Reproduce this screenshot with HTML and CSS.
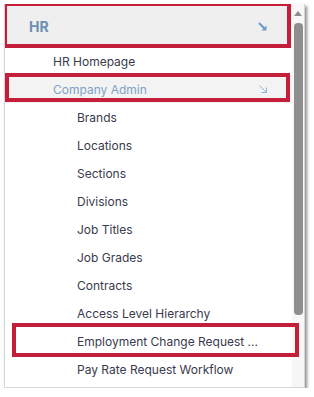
FILE: index.html
```html
<!DOCTYPE html>
<html>
<head>
    <title>Menu</title>
    <meta charset="utf-8"/>
    <link rel="stylesheet" href="styles.css">
</head>
<body>
    <div class="panel">
        <div class="menu">
            <div class="menu-head marked marked-head">
                <span>HR</span>
                <svg class="arrow" width="9" height="9" viewBox="0 0 9 9">
                    <path d="M1 1 L7 7" stroke="#6f9ccb" stroke-width="2.2"/>
                    <path d="M3.5 8.5 L8.5 8.5 L8.5 3.5 Z" fill="#6f9ccb"/>
                </svg>
            </div>
            <div class="item">HR Homepage</div>
            <div class="item item-open marked marked-sub">
                <span>Company Admin</span>
                <svg class="arrow-small" width="8" height="8" viewBox="0 0 8 8">
                    <path d="M0.5 0.5 L7 7" stroke="#8fb3d8" stroke-width="1"/>
                    <path d="M2.5 7.5 L7.5 7.5 L7.5 2.5" stroke="#8fb3d8" stroke-width="1" fill="none"/>
                </svg>
            </div>
            <div class="item sub">Brands</div>
            <div class="item sub">Locations</div>
            <div class="item sub">Sections</div>
            <div class="item sub">Divisions</div>
            <div class="item sub">Job Titles</div>
            <div class="item sub">Job Grades</div>
            <div class="item sub">Contracts</div>
            <div class="item sub">Access Level Hierarchy</div>
            <div class="item sub marked marked-row">Employment Change Request ...</div>
            <div class="item sub">Pay Rate Request Workflow</div>
        </div>
        <div class="scrollbar">
            <div class="scroll-up"></div>
            <div class="thumb"></div>
        </div>
    </div>
</body>
</html>
```

FILE: styles.css
```css
body {
    margin: 0;
    background-color: #ffffff;
    font-family: Inter, "Liberation Sans", sans-serif;
}

.panel {
    margin: 4px 0 0 4px;
    width: 299px;
    height: 383px;
    border: 1px solid #d6d6d6;
    border-top: none;
    display: flex;
    overflow: hidden;
    box-shadow: 2px 2px 3px rgba(0, 0, 0, 0.45);
    background-color: #ffffff;
}

.menu {
    width: 287px;
    flex-shrink: 0;
    padding-top: 1px;
}

.menu-head {
    height: 42px;
    display: flex;
    align-items: center;
    justify-content: space-between;
    padding: 0 25px 0 24px;
    background-color: #efefef;
    color: #6c90b4;
    font-size: 14px;
    font-weight: 700;
}

.item {
    height: 28px;
    display: flex;
    align-items: center;
    padding-left: 48px;
    font-size: 12px;
    color: #393a4d;
    white-space: nowrap;
}

.item-open {
    justify-content: space-between;
    padding-right: 25px;
    background-color: #f3f3f3;
    color: #7ea2c6;
}

.sub {
    padding-left: 72px;
}

.marked {
    position: relative;
}

.marked::after {
    content: "";
    position: absolute;
    border: 4px solid #c41e3a;
    z-index: 2;
}

.marked-head::after {
    top: -3px;
    left: -2px;
    right: 1px;
    bottom: -1px;
}

.marked-sub::after {
    top: -2px;
    left: 0;
    right: 2px;
    bottom: 1px;
}

.marked-row::after {
    top: -4px;
    left: 7px;
    right: -7px;
    bottom: -2px;
}

.scrollbar {
    width: 12px;
    flex-shrink: 0;
    background-color: #f7f7f7;
    display: flex;
    flex-direction: column;
    align-items: center;
    padding-top: 7px;
}

.scroll-up {
    width: 0;
    height: 0;
    border-left: 4px solid transparent;
    border-right: 4px solid transparent;
    border-bottom: 5px solid #8c8c8c;
}

.thumb {
    margin-top: 7px;
    width: 9px;
    height: 292px;
    border-radius: 4px;
    background-color: #8e8e8e;
}
```
